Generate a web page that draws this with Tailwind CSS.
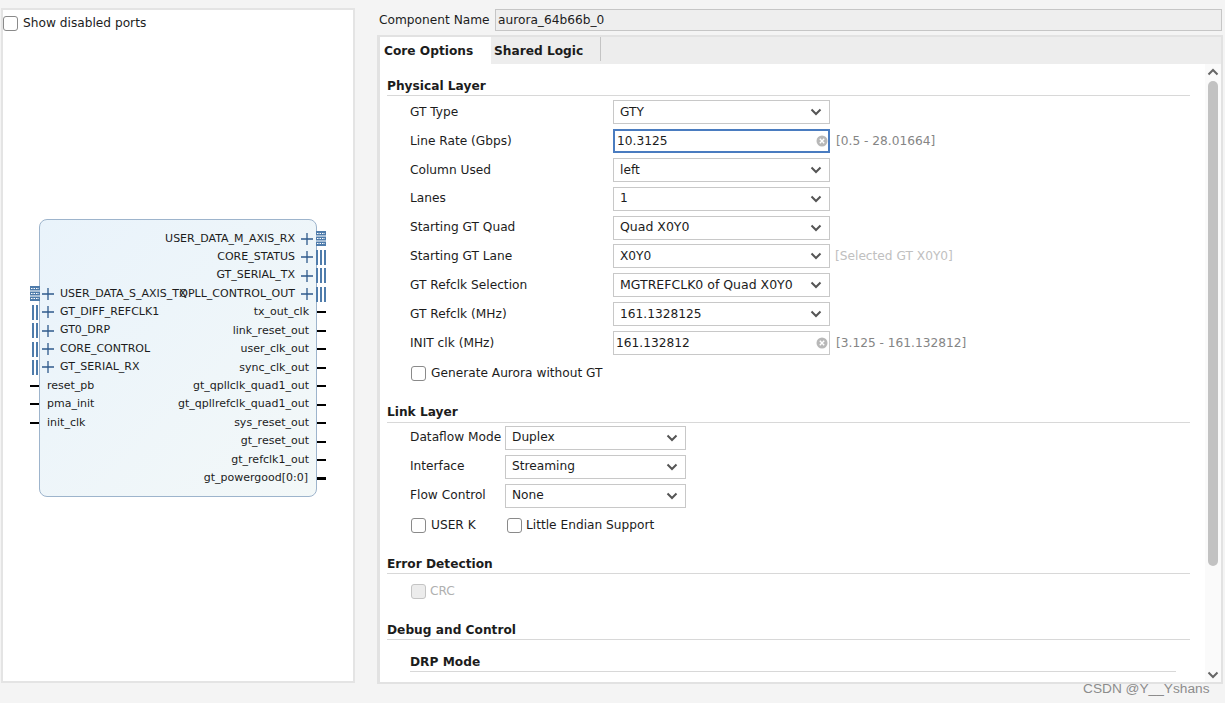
<!DOCTYPE html>
<html lang="en">
<head>
    <meta charset="UTF-8">
    <title>Aurora 64B66B - Customize IP</title>
    <script src="https://cdn.jsdelivr.net/npm/@tailwindcss/browser@4"></script>
</head>
<body class="bg-[#f4f4f4] font-['DejaVu_Sans',sans-serif] text-[12.2px] text-[#1c1c1c] overflow-hidden">
<div class="relative flex h-[703px] w-[1225px] overflow-hidden">

    <!-- Symbol panel -->
    <div class="relative mt-[8px] ml-[1px] h-[675px] w-[354px] border-[2px] border-[#e4e4e4] bg-white">
        <label class="mt-[4px] flex items-center gap-[5px]">
            <span class="h-[15px] w-[15px] rounded-[3px] border border-[#8a8a8a] bg-white"></span>
            <span>Show disabled ports</span>
        </label>

        <!-- IP block -->
        <div class="absolute top-[209px] left-[36px] h-[278px] w-[278px] rounded-[8px] border border-[#9db4cc] bg-gradient-to-br from-[#e9f3fb] to-[#f3f8f8]">
            <!-- right ports -->
            <div class="absolute top-[9.500px] -right-[10px] flex w-[200px] flex-col items-end text-[11px] leading-[18.45px]">
                <div class="flex h-[18.45px] items-center"><span>USER_DATA_M_AXIS_RX</span><svg class="ml-[6px]" width="12" height="12" viewBox="0 0 12 12"><path d="M0 6h12M6 0v12" stroke="#2f5a8c" stroke-width="1.3"/></svg><svg class="ml-[3px]" width="10" height="15" viewBox="0 0 10 15"><rect width="10" height="15" fill="#4f7cab"/><path d="M0 5h10M0 10h10" stroke="#fff"/><path d="M1 2.500h8M1 7.500h8M1 12.500h8" stroke="#fff" stroke-dasharray="1.500 1"/></svg></div>
                <div class="flex h-[18.45px] items-center"><span>CORE_STATUS</span><svg class="ml-[6px]" width="12" height="12" viewBox="0 0 12 12"><path d="M0 6h12M6 0v12" stroke="#2f5a8c" stroke-width="1.3"/></svg><svg class="ml-[3px]" width="10" height="15" viewBox="0 0 10 15"><path d="M1 0v15M5 0v15M9 0v15" stroke="#4f7cab" stroke-width="2"/></svg></div>
                <div class="flex h-[18.45px] items-center"><span>GT_SERIAL_TX</span><svg class="ml-[6px]" width="12" height="12" viewBox="0 0 12 12"><path d="M0 6h12M6 0v12" stroke="#2f5a8c" stroke-width="1.3"/></svg><svg class="ml-[3px]" width="10" height="15" viewBox="0 0 10 15"><path d="M1 0v15M5 0v15M9 0v15" stroke="#4f7cab" stroke-width="2"/></svg></div>
                <div class="flex h-[18.45px] items-center"><span>QPLL_CONTROL_OUT</span><svg class="ml-[6px]" width="12" height="12" viewBox="0 0 12 12"><path d="M0 6h12M6 0v12" stroke="#2f5a8c" stroke-width="1.3"/></svg><svg class="ml-[3px]" width="10" height="15" viewBox="0 0 10 15"><path d="M1 0v15M5 0v15M9 0v15" stroke="#4f7cab" stroke-width="2"/></svg></div>
                <div class="flex h-[18.45px] items-center"><span>tx_out_clk</span><span class="ml-[8px] h-[2px] w-[9px] bg-black"></span></div>
                <div class="flex h-[18.45px] items-center"><span>link_reset_out</span><span class="ml-[8px] h-[2px] w-[9px] bg-black"></span></div>
                <div class="flex h-[18.45px] items-center"><span>user_clk_out</span><span class="ml-[8px] h-[2px] w-[9px] bg-black"></span></div>
                <div class="flex h-[18.45px] items-center"><span>sync_clk_out</span><span class="ml-[8px] h-[2px] w-[9px] bg-black"></span></div>
                <div class="flex h-[18.45px] items-center"><span>gt_qpllclk_quad1_out</span><span class="ml-[8px] h-[2px] w-[9px] bg-black"></span></div>
                <div class="flex h-[18.45px] items-center"><span>gt_qpllrefclk_quad1_out</span><span class="ml-[8px] h-[2px] w-[9px] bg-black"></span></div>
                <div class="flex h-[18.45px] items-center"><span>sys_reset_out</span><span class="ml-[8px] h-[2px] w-[9px] bg-black"></span></div>
                <div class="flex h-[18.45px] items-center"><span>gt_reset_out</span><span class="ml-[8px] h-[2px] w-[9px] bg-black"></span></div>
                <div class="flex h-[18.45px] items-center"><span>gt_refclk1_out</span><span class="ml-[8px] h-[2px] w-[9px] bg-black"></span></div>
                <div class="flex h-[18.45px] items-center"><span>gt_powergood[0:0]</span><span class="ml-[9px] h-[3px] w-[9px] bg-black"></span></div>
            </div>
            <!-- left ports -->
            <div class="absolute top-[64.500px] -left-[10px] flex w-[170px] flex-col items-start text-[11px] leading-[18.45px]">
                <div class="flex h-[18.45px] items-center whitespace-nowrap"><svg width="10" height="15" viewBox="0 0 10 15"><rect width="10" height="15" fill="#4f7cab"/><path d="M0 5h10M0 10h10" stroke="#fff"/><path d="M1 2.500h8M1 7.500h8M1 12.500h8" stroke="#fff" stroke-dasharray="1.500 1"/></svg><svg class="ml-[2px]" width="12" height="12" viewBox="0 0 12 12"><path d="M0 6h12M6 0v12" stroke="#2f5a8c" stroke-width="1.3"/></svg><span class="ml-[6px]">USER_DATA_S_AXIS_TX</span></div>
                <div class="flex h-[18.45px] items-center"><svg width="10" height="15" viewBox="0 0 10 15"><path d="M3 0v15M7 0v15" stroke="#4f7cab" stroke-width="2"/></svg><svg class="ml-[2px]" width="12" height="12" viewBox="0 0 12 12"><path d="M0 6h12M6 0v12" stroke="#2f5a8c" stroke-width="1.3"/></svg><span class="ml-[6px]">GT_DIFF_REFCLK1</span></div>
                <div class="flex h-[18.45px] items-center"><svg width="10" height="15" viewBox="0 0 10 15"><path d="M3 0v15M7 0v15" stroke="#4f7cab" stroke-width="2"/></svg><svg class="ml-[2px]" width="12" height="12" viewBox="0 0 12 12"><path d="M0 6h12M6 0v12" stroke="#2f5a8c" stroke-width="1.3"/></svg><span class="ml-[6px]">GT0_DRP</span></div>
                <div class="flex h-[18.45px] items-center"><svg width="10" height="15" viewBox="0 0 10 15"><path d="M3 0v15M7 0v15" stroke="#4f7cab" stroke-width="2"/></svg><svg class="ml-[2px]" width="12" height="12" viewBox="0 0 12 12"><path d="M0 6h12M6 0v12" stroke="#2f5a8c" stroke-width="1.3"/></svg><span class="ml-[6px]">CORE_CONTROL</span></div>
                <div class="flex h-[18.45px] items-center"><svg width="10" height="15" viewBox="0 0 10 15"><path d="M3 0v15M7 0v15" stroke="#4f7cab" stroke-width="2"/></svg><svg class="ml-[2px]" width="12" height="12" viewBox="0 0 12 12"><path d="M0 6h12M6 0v12" stroke="#2f5a8c" stroke-width="1.3"/></svg><span class="ml-[6px]">GT_SERIAL_RX</span></div>
                <div class="flex h-[18.45px] items-center"><span class="h-[2px] w-[9px] bg-black"></span><span class="ml-[8px]">reset_pb</span></div>
                <div class="flex h-[18.45px] items-center"><span class="h-[2px] w-[9px] bg-black"></span><span class="ml-[8px]">pma_init</span></div>
                <div class="flex h-[18.45px] items-center"><span class="h-[2px] w-[9px] bg-black"></span><span class="ml-[8px]">init_clk</span></div>
            </div>
        </div>
    </div>

    <!-- Options panel -->
    <div class="ml-[23px] flex w-[845px] flex-col">
        <div class="mt-[9px] flex h-[22px] items-center">
            <span class="ml-[1px] w-[116px]">Component Name</span>
            <div class="flex h-[22px] w-[727px] items-center border border-[#c6c6c6] bg-[#eeeeee] pl-[2px]">aurora_64b66b_0</div>
        </div>

        <div class="mt-[4px] -ml-[1px] flex h-[649px] flex-col border-[2px] border-l-[3px] border-[#e2e2e2] bg-white">
            <!-- tabs -->
            <div class="flex h-[27px] items-stretch bg-[#ededed] font-bold">
                <div class="flex w-[111px] items-center bg-white pt-[2px] pl-[4px]">Core Options</div>
                <div class="mb-[3px] flex w-[110px] items-center border-r border-[#c4c4c4] pt-[5px] pl-[3px]">Shared Logic</div>
            </div>

            <div class="flex min-h-0 flex-1">
                <div class="min-w-0 flex-1 overflow-hidden pl-[7px]">
                    <!-- Physical Layer -->
                    <h3 class="mt-[15px] h-[17px] w-[803px] border-b border-[#d8d8d8] font-bold leading-[14px]">Physical Layer</h3>
                    <div class="mt-[4px] flex flex-col gap-[4.875px] pl-[23px]">
                        <div class="flex h-[24px] items-center"><span class="w-[203px]">GT Type</span><div class="flex h-[24px] w-[217px] items-center justify-between border border-[#c8c8c8] pr-[7px] pl-[6px]"><span>GTY</span><svg width="12" height="8" viewBox="0 0 12 8"><path d="M1.500 1.500L6 6l4.500-4.500" fill="none" stroke="#555" stroke-width="2"/></svg></div></div>
                        <div class="flex h-[24px] items-center"><span class="w-[203px]">Line Rate (Gbps)</span><div class="flex h-[24px] w-[217px] items-center justify-between border-[2px] border-[#4a7cc0] pr-0 pl-[2px]"><span>10.3125</span><svg width="12" height="12" viewBox="0 0 12 12"><circle cx="6" cy="6" r="5.500" fill="#b8b8b8"/><path d="M3.800 3.800l4.400 4.400M8.200 3.800l-4.400 4.400" stroke="#fff" stroke-width="1.400"/></svg></div><span class="ml-[6px] text-[#858585]">[0.5 - 28.01664]</span></div>
                        <div class="flex h-[24px] items-center"><span class="w-[203px]">Column Used</span><div class="flex h-[24px] w-[217px] items-center justify-between border border-[#c8c8c8] pr-[7px] pl-[6px]"><span>left</span><svg width="12" height="8" viewBox="0 0 12 8"><path d="M1.500 1.500L6 6l4.500-4.500" fill="none" stroke="#555" stroke-width="2"/></svg></div></div>
                        <div class="flex h-[24px] items-center"><span class="w-[203px]">Lanes</span><div class="flex h-[24px] w-[217px] items-center justify-between border border-[#c8c8c8] pr-[7px] pl-[6px]"><span>1</span><svg width="12" height="8" viewBox="0 0 12 8"><path d="M1.500 1.500L6 6l4.500-4.500" fill="none" stroke="#555" stroke-width="2"/></svg></div></div>
                        <div class="flex h-[24px] items-center"><span class="w-[203px]">Starting GT Quad</span><div class="flex h-[24px] w-[217px] items-center justify-between border border-[#c8c8c8] pr-[7px] pl-[6px]"><span class="text-[12.5px]">Quad X0Y0</span><svg width="12" height="8" viewBox="0 0 12 8"><path d="M1.500 1.500L6 6l4.500-4.500" fill="none" stroke="#555" stroke-width="2"/></svg></div></div>
                        <div class="flex h-[24px] items-center"><span class="w-[203px]">Starting GT Lane</span><div class="flex h-[24px] w-[217px] items-center justify-between border border-[#c8c8c8] pr-[7px] pl-[6px]"><span>X0Y0</span><svg width="12" height="8" viewBox="0 0 12 8"><path d="M1.500 1.500L6 6l4.500-4.500" fill="none" stroke="#555" stroke-width="2"/></svg></div><span class="ml-[5px] text-[#c0c0c0]">[Selected GT X0Y0]</span></div>
                        <div class="flex h-[24px] items-center"><span class="w-[203px]">GT Refclk Selection</span><div class="flex h-[24px] w-[217px] items-center justify-between border border-[#c8c8c8] pr-[7px] pl-[6px]"><span class="text-[12.5px]">MGTREFCLK0 of Quad X0Y0</span><svg width="12" height="8" viewBox="0 0 12 8"><path d="M1.500 1.500L6 6l4.500-4.500" fill="none" stroke="#555" stroke-width="2"/></svg></div></div>
                        <div class="flex h-[24px] items-center"><span class="w-[203px]">GT Refclk (MHz)</span><div class="flex h-[24px] w-[217px] items-center justify-between border border-[#c8c8c8] pr-[7px] pl-[6px]"><span>161.1328125</span><svg width="12" height="8" viewBox="0 0 12 8"><path d="M1.500 1.500L6 6l4.500-4.500" fill="none" stroke="#555" stroke-width="2"/></svg></div></div>
                        <div class="flex h-[24px] items-center"><span class="w-[203px]">INIT clk (MHz)</span><div class="flex h-[24px] w-[217px] items-center justify-between border border-[#c8c8c8] pr-[1px] pl-[2px]"><span>161.132812</span><svg width="12" height="12" viewBox="0 0 12 12"><circle cx="6" cy="6" r="5.500" fill="#b8b8b8"/><path d="M3.800 3.800l4.400 4.400M8.200 3.800l-4.400 4.400" stroke="#fff" stroke-width="1.400"/></svg></div><span class="ml-[6px] text-[#858585]">[3.125 - 161.132812]</span></div>
                    </div>
                    <label class="mt-[10px] ml-[24px] flex h-[16px] items-center gap-[5px]"><span class="h-[15px] w-[15px] rounded-[3px] border border-[#8a8a8a] bg-white"></span>Generate Aurora without GT</label>

                    <!-- Link Layer -->
                    <h3 class="mt-[24px] h-[18px] w-[803px] border-b border-[#d8d8d8] font-bold leading-[14px]">Link Layer</h3>
                    <div class="mt-[2.500px] flex flex-col gap-[5px] pl-[23px]">
                        <div class="flex h-[24px] items-center"><span class="w-[95px]">Dataflow Mode</span><div class="flex h-[24px] w-[181px] items-center justify-between border border-[#c8c8c8] pr-[7px] pl-[6px]"><span>Duplex</span><svg width="12" height="8" viewBox="0 0 12 8"><path d="M1.500 1.500L6 6l4.500-4.500" fill="none" stroke="#555" stroke-width="2"/></svg></div></div>
                        <div class="flex h-[24px] items-center"><span class="w-[95px]">Interface</span><div class="flex h-[24px] w-[181px] items-center justify-between border border-[#c8c8c8] pr-[7px] pl-[6px]"><span>Streaming</span><svg width="12" height="8" viewBox="0 0 12 8"><path d="M1.500 1.500L6 6l4.500-4.500" fill="none" stroke="#555" stroke-width="2"/></svg></div></div>
                        <div class="flex h-[24px] items-center"><span class="w-[95px]">Flow Control</span><div class="flex h-[24px] w-[181px] items-center justify-between border border-[#c8c8c8] pr-[7px] pl-[6px]"><span>None</span><svg width="12" height="8" viewBox="0 0 12 8"><path d="M1.500 1.500L6 6l4.500-4.500" fill="none" stroke="#555" stroke-width="2"/></svg></div></div>
                    </div>
                    <div class="mt-[9.500px] ml-[24px] flex h-[16px] items-center">
                        <label class="flex w-[96px] items-center gap-[5px]"><span class="h-[15px] w-[15px] rounded-[3px] border border-[#8a8a8a] bg-white"></span>USER K</label>
                        <label class="flex items-center gap-[4px]"><span class="h-[15px] w-[15px] rounded-[3px] border border-[#8a8a8a] bg-white"></span>Little Endian Support</label>
                    </div>

                    <!-- Error Detection -->
                    <h3 class="mt-[24px] h-[16.500px] w-[803px] border-b border-[#d8d8d8] font-bold leading-[14px]">Error Detection</h3>
                    <label class="mt-[10px] ml-[24px] flex h-[16px] items-center gap-[4px] text-[#b0b0b0]"><span class="h-[15px] w-[15px] rounded-[3px] border border-[#c4c4c4] bg-[#ececec]"></span>CRC</label>

                    <!-- Debug and Control -->
                    <h3 class="mt-[23.500px] h-[16.500px] w-[803px] border-b border-[#d8d8d8] font-bold leading-[14px]">Debug and Control</h3>
                    <h4 class="mt-[15.500px] ml-[23px] h-[16.500px] w-[766px] border-b border-[#d8d8d8] font-bold leading-[14px]">DRP Mode</h4>
                </div>

                <!-- scrollbar -->
                <div class="flex w-[16px] flex-col items-center bg-[#fafafa] pt-[4px] pb-[3px]">
                    <svg width="12" height="8" viewBox="0 0 12 8"><path d="M1.500 6.500L6 2l4.500 4.500" fill="none" stroke="#666" stroke-width="2"/></svg>
                    <div class="mt-[5px] h-[485px] w-[10px] rounded-[5px] bg-[#c2c2c2]"></div>
                    <svg class="mt-auto" width="12" height="8" viewBox="0 0 12 8"><path d="M1.500 1.500L6 6l4.500-4.500" fill="none" stroke="#666" stroke-width="2"/></svg>
                </div>
            </div>
        </div>
    </div>

    <!-- Watermark -->
    <div class="absolute top-[679px] left-[1083px] font-['Liberation_Sans',sans-serif] text-[13.7px] text-[#8c8c8c]">CSDN @Y__Yshans</div>
</div>
</body>
</html>
